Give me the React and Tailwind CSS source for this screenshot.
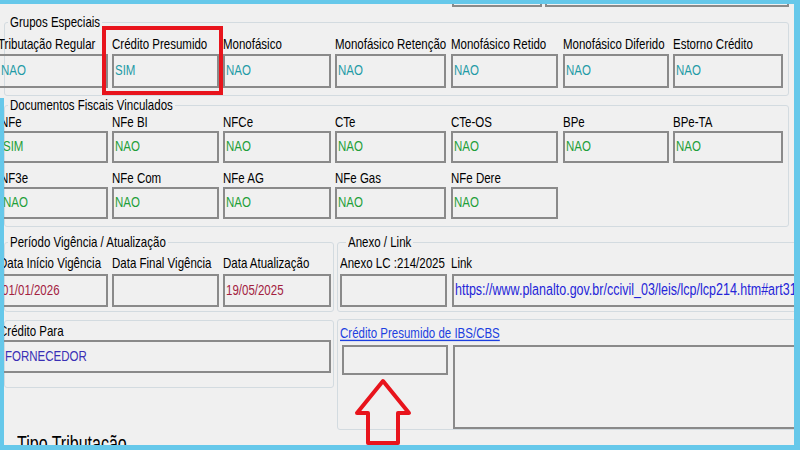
import React from "react";

const COLS = [
  { c: "w-[114px]", b: "w-[110px]" },
  { c: "w-[111px]", b: "w-[107px]" },
  { c: "w-[112px]", b: "w-[108px]" },
  { c: "w-[116px]", b: "w-[111px]" },
  { c: "w-[112px]", b: "w-[107px]" },
  { c: "w-[110px]", b: "w-[106px]" },
  { c: "w-[110px]", b: "w-[110px]" },
];

const COLS2 = [{ c: "w-[112px]", b: "w-[108px]" }, ...COLS.slice(1)];

function T({ children, className = "" }) {
  return <span className={"inline-block scale-y-[1.35] whitespace-nowrap " + className}>{children}</span>;
}

function Field({ col, label, value, color, h, gap }) {
  return (
    <div className={col.c + " shrink-0 flex flex-col " + gap}>
      <div className="h-[14px] leading-[14px] whitespace-nowrap">
        <T>{label}</T>
      </div>
      <div className={col.b + " " + h + " border-2 border-[#8a8a8a] flex items-center pl-[1px] " + color}>
        {value ? <T>{value}</T> : null}
      </div>
    </div>
  );
}

const TEAL = "text-[#1f9ba6]";
const GREEN = "text-[#1f9f3a]";
const RED = "text-[#a3213f]";

export default function App() {
  const grupos = [
    ["Tributação Regular", "NAO"],
    ["Crédito Presumido", "SIM"],
    ["Monofásico", "NAO"],
    ["Monofásico Retenção", "NAO"],
    ["Monofásico Retido", "NAO"],
    ["Monofásico Diferido", "NAO"],
    ["Estorno Crédito", "NAO"],
  ];
  const docs1 = [
    ["NFe", "SIM"],
    ["NFe BI", "NAO"],
    ["NFCe", "NAO"],
    ["CTe", "NAO"],
    ["CTe-OS", "NAO"],
    ["BPe", "NAO"],
    ["BPe-TA", "NAO"],
  ];
  const docs2 = [
    ["NF3e", "NAO"],
    ["NFe Com", "NAO"],
    ["NFe AG", "NAO"],
    ["NFe Gas", "NAO"],
    ["NFe Dere", "NAO"],
  ];
  const datas = [
    ["Data Início Vigência", "01/01/2026"],
    ["Data Final Vigência", ""],
    ["Data Atualização", "19/05/2025"],
  ];

  return (
    <div className="relative w-[800px] h-[450px] overflow-hidden bg-[#f0f0f0] text-black font-['Liberation_Sans',Arial,sans-serif] text-[11.5px]">
      {/* previous row box bottoms */}
      <div className="flex h-[7px] pl-[452px] gap-[3px]">
        <div className="w-[90px] h-full border-2 border-t-0 border-[#8a8a8a]" />
        <div className="w-[244px] h-full border-2 border-t-0 border-[#8a8a8a]" />
      </div>

      {/* Grupos Especiais */}
      <fieldset className="ml-[4px] mt-[8px] w-[785px] min-w-0 border border-[#d3dbe0] rounded-[3px] pt-[8px] pb-[7px]">
        <legend className="ml-[3px] px-[2px] leading-[14px]">
          <T>Grupos Especiais</T>
        </legend>
        <div className="flex ml-[-7px]">
          {grupos.map(([l, v], i) => (
            <Field key={l} col={COLS[i]} label={l} value={v} color={TEAL} h="h-[34px]" gap="gap-[3px]" />
          ))}
        </div>
      </fieldset>

      {/* Documentos Fiscais Vinculados */}
      <fieldset className="ml-[4px] mt-[2px] w-[785px] min-w-0 border border-[#d3dbe0] rounded-[3px] pt-[3px] pb-[7px]">
        <legend className="ml-[3px] px-[2px] leading-[14px]">
          <T>Documentos Fiscais Vinculados</T>
        </legend>
        <div className="flex flex-col gap-[8px] ml-[-5px]">
          <div className="flex">
            {docs1.map(([l, v], i) => (
              <Field key={l} col={COLS2[i]} label={l} value={v} color={GREEN} h="h-[32px]" gap="gap-[2px]" />
            ))}
          </div>
          <div className="flex">
            {docs2.map(([l, v], i) => (
              <Field key={l} col={COLS2[i]} label={l} value={v} color={GREEN} h="h-[32px]" gap="gap-[2px]" />
            ))}
          </div>
        </div>
      </fieldset>

      {/* Bottom area */}
      <div className="flex items-start mt-[8px]">
        <div className="ml-[4px] w-[330px] shrink-0 flex flex-col">
          <fieldset className="min-w-0 border border-[#d3dbe0] rounded-[3px] pt-[7px] pb-[4px]">
            <legend className="ml-[3px] px-[2px] leading-[14px]">
              <T>Período Vigência / Atualização</T>
            </legend>
            <div className="flex ml-[-6px]">
              {datas.map(([l, v], i) => (
                <Field
                  key={l}
                  col={i === 0 ? { c: "w-[113px]", b: "w-[109px]" } : COLS[i]}
                  label={l}
                  value={v}
                  color={RED}
                  h="h-[33px]"
                  gap="gap-[4px]"
                />
              ))}
            </div>
          </fieldset>

          <div className="mt-[8px] border border-[#d3dbe0] rounded-[3px] pt-[3px] pb-[14px]">
            <div className="ml-[-6px] flex flex-col gap-[2px]">
              <div className="h-[14px] leading-[14px]">
                <T>Crédito Para</T>
              </div>
              <div className="w-[332px] h-[33px] border-2 border-[#8a8a8a] flex items-center pl-[4px] text-[#3a2fb5]">
                <T>FORNECEDOR</T>
              </div>
            </div>
          </div>

          <div className="mt-[47px] pl-[13px] text-[16px] leading-[18px]">
            <T>Tipo Tributação</T>
          </div>
        </div>

        <div className="ml-[3px] w-[470px] shrink-0 flex flex-col">
          <fieldset className="min-w-0 border border-[#d3dbe0] rounded-[3px] pt-[7px] pb-[4px]">
            <legend className="ml-[8px] px-[2px] leading-[14px]">
              <T>Anexo / Link</T>
            </legend>
            <div className="flex pl-[2px]">
              <div className="w-[111px] shrink-0 flex flex-col gap-[4px]">
                <div className="h-[14px] leading-[14px]">
                  <T>Anexo LC :214/2025</T>
                </div>
                <div className="w-[107px] h-[33px] border-2 border-[#8a8a8a]" />
              </div>
              <div className="w-[400px] shrink-0 flex flex-col gap-[4px]">
                <div className="h-[14px] leading-[14px]">
                  <T>Link</T>
                </div>
                <div className="ml-[1px] w-[400px] h-[33px] border-2 border-[#8a8a8a] flex items-center pl-[1px] text-[#2525d8] text-[12.5px]">
                  <T>https://www.planalto.gov.br/ccivil_03/leis/lcp/lcp214.htm#art31</T>
                </div>
              </div>
            </div>
          </fieldset>

          <div className="mt-[7px] border border-[#d3dbe0] rounded-[3px] pt-[6px]">
            <div className="h-[14px] leading-[14px] pl-[2px]">
              <T className="text-[#1c3fe0] underline">Crédito Presumido de IBS/CBS</T>
            </div>
            <div className="flex items-start mt-[5px] pl-[4px] gap-[5px]">
              <div className="w-[106px] h-[30px] shrink-0 border-2 border-[#8a8a8a]" />
              <div className="w-[400px] h-[84px] shrink-0 border-2 border-[#8a8a8a]" />
            </div>
          </div>
        </div>
      </div>

      {/* annotations */}
      <div className="absolute left-[102px] top-[26px] w-[121px] h-[69px] border-4 border-[#e8141c]" />
      <svg className="absolute left-[354px] top-[378px]" width="58" height="68" viewBox="0 0 58 68">
        <path
          d="M29 3 L55 35 L44 35 L44 65 L14 65 L14 35 L3 35 Z"
          fill="none"
          stroke="#e8141c"
          strokeWidth="4"
          strokeLinejoin="round"
        />
      </svg>

      {/* cyan frame */}
      <div className="absolute left-0 right-0 top-0 h-[4px] bg-[#66c8ea]" />
      <div className="absolute right-0 top-0 bottom-0 w-[6px] bg-[#66c8ea]" />
      <div className="absolute left-0 right-0 bottom-0 h-[5px] bg-[#66c8ea]" />
      <div className="absolute left-0 top-[98px] bottom-0 w-[4px] bg-[#66c8ea]" />
    </div>
  );
}
